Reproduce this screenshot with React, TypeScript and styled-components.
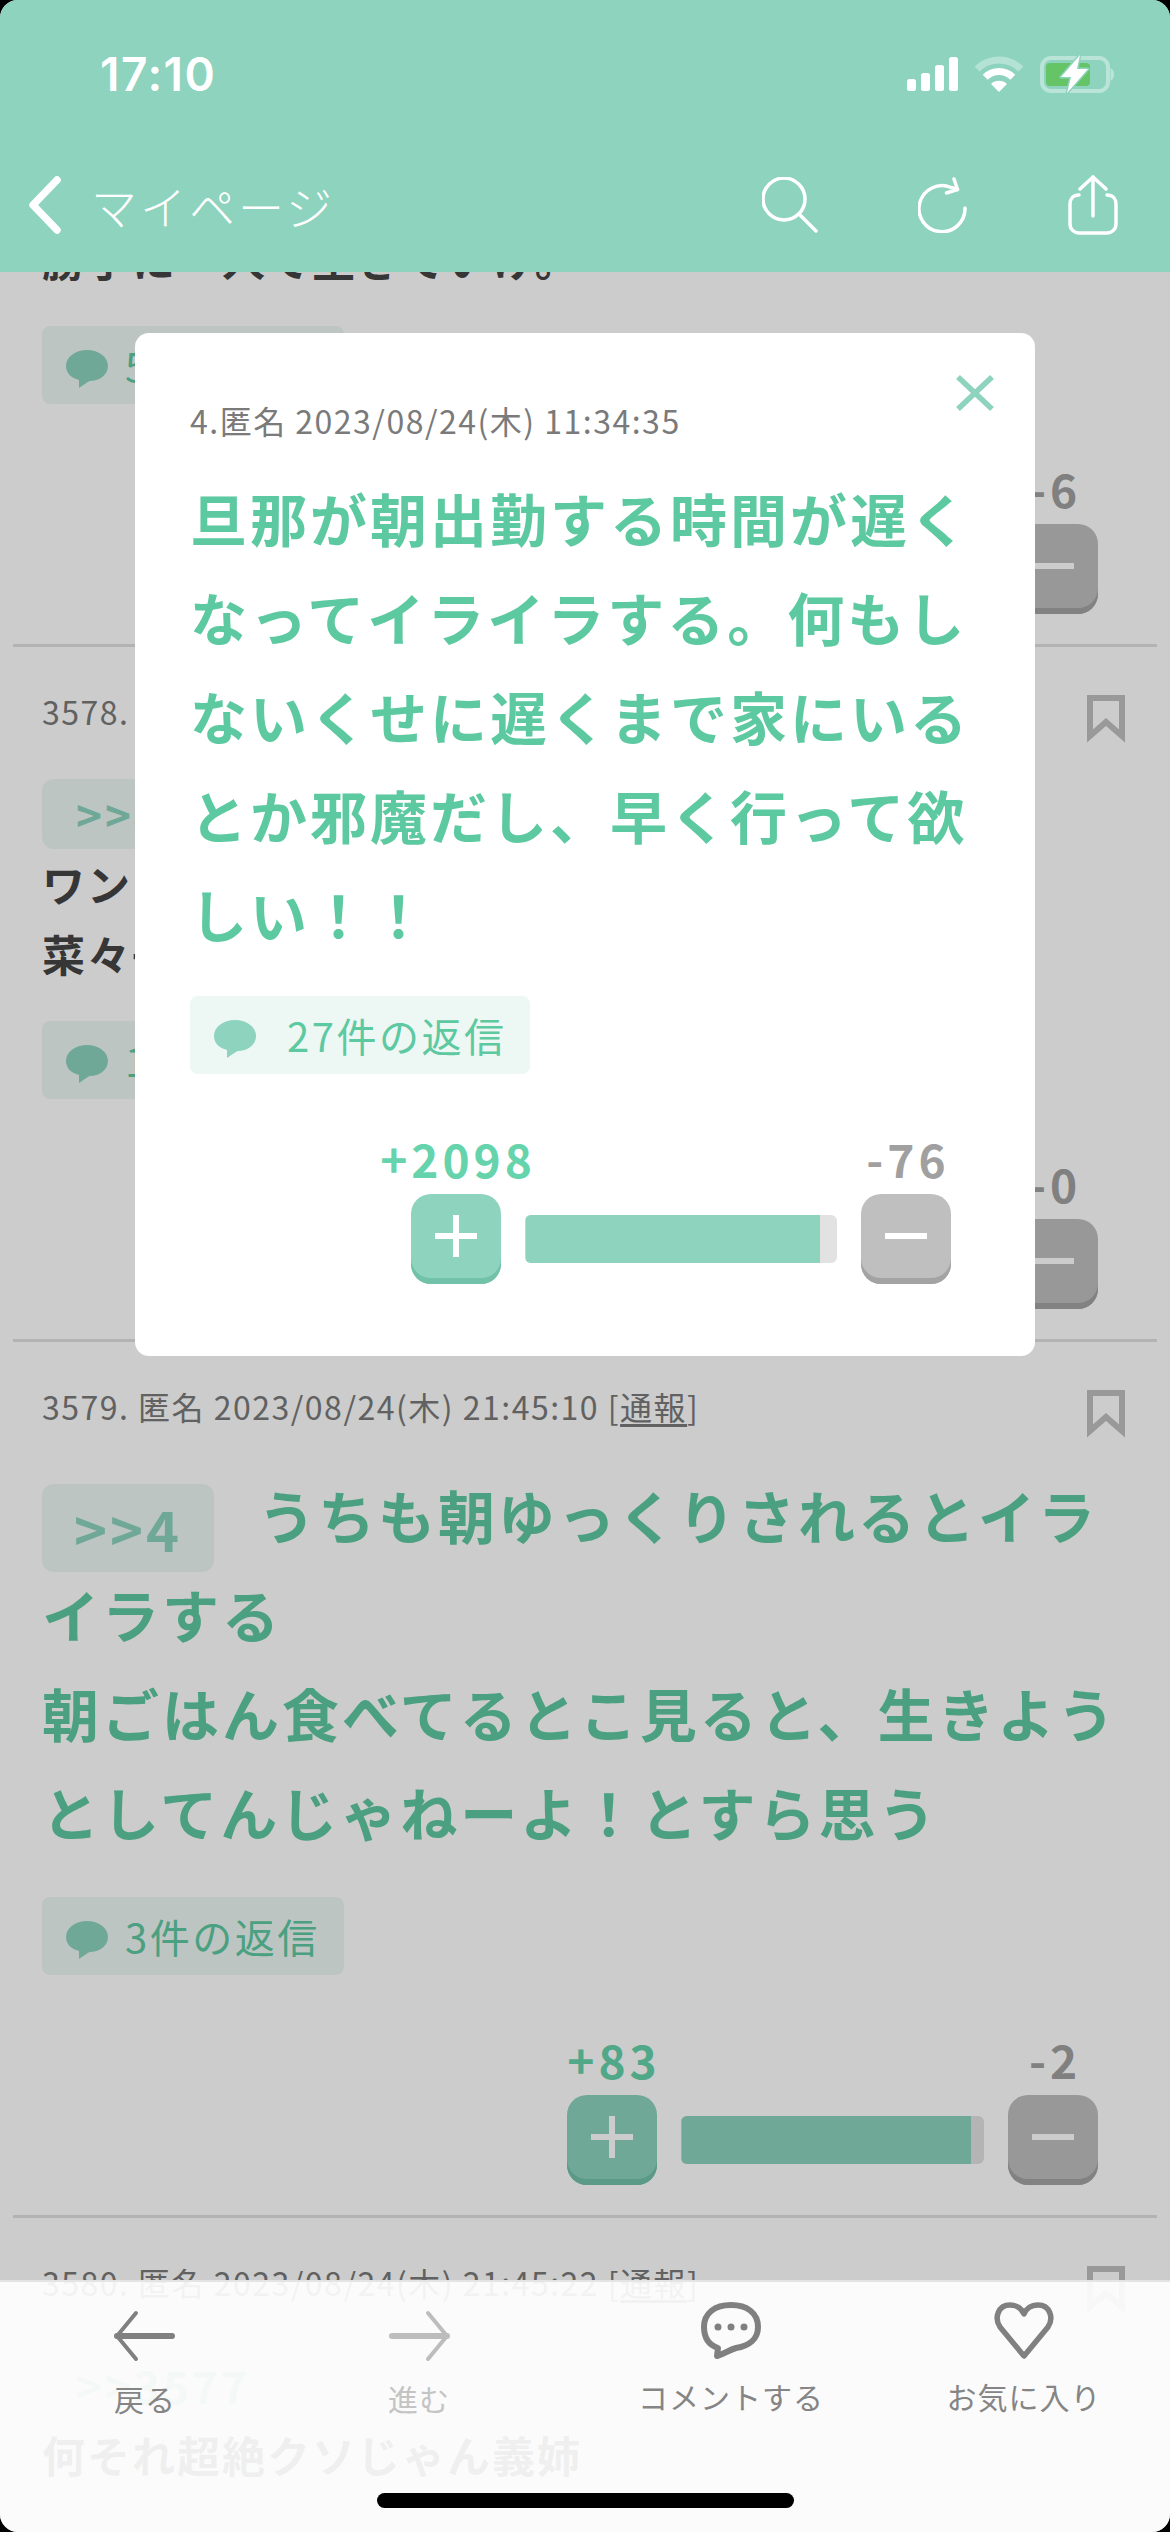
import React from "react";
import styled, { createGlobalStyle } from "styled-components";

const GlobalStyle = createGlobalStyle`
  html, body {
    margin: 0;
    padding: 0;
    background: #000000;
  }
  * {
    box-sizing: border-box;
  }
`;

const Phone = styled.div`
  position: relative;
  width: 1170px;
  height: 2532px;
  overflow: hidden;
  border-radius: 18px;
  background: #ffffff;
  font-family: "Noto Sans CJK JP", "Noto Sans", sans-serif;
`;

const Header = styled.header`
  position: relative;
  z-index: 3;
  height: 272px;
  background: #8dd3be;
  color: #ffffff;
`;

const StatusBar = styled.div`
  height: 148px;
  padding: 0 55px 0 100px;
  display: flex;
  align-items: center;
  justify-content: space-between;
`;

const Time = styled.span`
  font-family: Inter, sans-serif;
  font-weight: 600;
  font-size: 46px;
  letter-spacing: 1.500px;
`;

const StatusIcons = styled.div`
  display: flex;
  align-items: center;
  gap: 15px;
`;

const Nav = styled.nav`
  height: 124px;
  padding: 0 52px 10px 28px;
  display: flex;
  align-items: center;
`;

const NavTitle = styled.span`
  margin-left: 29px;
  margin-right: auto;
  font-size: 46px;
  letter-spacing: 3px;
  font-weight: 300;
`;

const NavIcons = styled.div`
  display: flex;
  align-items: center;
  gap: 100px;
`;

const Feed = styled.main`
  margin-top: -49px;
`;

const Post = styled.article`
  padding: 0 42px;
`;

const Meta = styled.div`
  font-size: 32px;
  line-height: 44px;
  color: #7a7a7a;
  letter-spacing: 1.500px;
  white-space: nowrap;

  u {
    text-underline-offset: 4px;
  }
`;

const PostTop = styled.div`
  padding-top: 44px;
  height: 92px;
  margin-bottom: 38px;
  display: flex;
  align-items: center;
  justify-content: space-between;

  ${Meta} {
    margin-bottom: 8px;
  }
`;

const Bookmark = styled.svg`
  width: 38px;
  height: 48px;
  margin: 8px 3px 0 0;
  flex: none;
`;

const Divider = styled.hr`
  margin: 30px -29px 0;
  border: 0;
  height: 3px;
  background: #e0e0e0;
`;

const Tag = styled.span<{ $large?: boolean }>`
  display: inline-block;
  height: ${(p) => (p.$large ? "88px" : "70px")};
  line-height: ${(p) => (p.$large ? "88px" : "70px")};
  padding: 0 ${(p) => (p.$large ? "32px" : "34px")};
  margin-top: ${(p) => (p.$large ? "0" : "2px")};
  margin-right: ${(p) => (p.$large ? "44px" : "0")};
  margin-bottom: ${(p) => (p.$large ? "-8px" : "-1px")};
  border-radius: 12px;
  background: #edf7f4;
  color: #8dd3be;
  font-size: ${(p) => (p.$large ? "56px" : "44px")};
  font-weight: 700;
  letter-spacing: 3px;
  vertical-align: ${(p) => (p.$large ? "-13px" : "top")};
`;

const Title = styled.div`
  font-size: 57px;
  line-height: 99px;
  font-weight: 700;
  letter-spacing: 3px;
  color: #5dc9a1;
`;

const PostTitle = styled(Title)`
  margin-top: -7px;
  padding-bottom: 3px;
`;

const PlainText = styled.div`
  font-size: 43px;
  line-height: 70px;
  font-weight: 700;
  letter-spacing: 2px;
  color: #444444;
  white-space: nowrap;
`;

const Replies = styled.div<{ $gap: number; $inset: number }>`
  display: flex;
  align-items: center;
  width: fit-content;
  height: 78px;
  margin-top: 33px;
  padding: 0 24px 0 ${(p) => p.$inset}px;
  gap: ${(p) => p.$gap}px;
  border-radius: 8px;
  background: #edf7f4;
  color: #5dc9a1;
  font-size: 40px;
  letter-spacing: 2.500px;
  white-space: nowrap;

  svg {
    margin-top: 8px;
  }
`;

const VoteGrid = styled.div<{ $width: number; $inset: number }>`
  display: grid;
  grid-template-columns: 90px 1fr 90px;
  column-gap: 24px;
  row-gap: 14px;
  width: ${(p) => p.$width}px;
  margin: 62px ${(p) => p.$inset}px 0 auto;
  align-items: start;
`;

const Count = styled.span<{ $kind: "plus" | "minus" }>`
  justify-self: center;
  margin-left: 4px;
  line-height: 44px;
  font-size: 46px;
  font-weight: 700;
  letter-spacing: 4px;
  white-space: nowrap;
  color: ${(p) => (p.$kind === "plus" ? "#65d3ab" : "#a0a0a0")};

  &:nth-child(2) {
    grid-column: 3;
  }
`;

const VoteButton = styled.div<{ $kind: "plus" | "minus" }>`
  height: 90px;
  padding-bottom: 6px;
  display: flex;
  align-items: center;
  justify-content: center;
  border-radius: 20px;
  background: ${(p) => (p.$kind === "plus" ? "#8dd3be" : "#bfbfbf")};
  box-shadow: inset 0 -6px 0 ${(p) => (p.$kind === "plus" ? "#72c1a9" : "#a3a3a3")};
`;

const Track = styled.div`
  position: relative;
  height: 48px;
  margin-top: 21px;
  overflow: hidden;
  border-radius: 6px;
  background: #e2e2e2;
`;

const Fill = styled.div`
  height: 100%;
  background: #8dd3be;
  box-shadow: inset 7px 0 0 -6px rgba(255, 255, 255, 0.3);
`;

const Backdrop = styled.div`
  position: absolute;
  inset: 0;
  z-index: 1;
  background: rgba(0, 0, 0, 0.2);
`;

const Modal = styled.section`
  position: absolute;
  z-index: 2;
  left: 135px;
  top: 333px;
  width: 900px;
  height: 1023px;
  padding: 65px 84px 0 55px;
  border-radius: 14px;
  background: #ffffff;
`;

const ModalBody = styled(Title)`
  width: 790px;
  margin-top: 26px;
`;

const CloseIcon = styled.svg`
  position: absolute;
  top: 42px;
  right: 41px;
  width: 38px;
  height: 36px;
`;

const Footer = styled.footer`
  position: absolute;
  z-index: 3;
  left: 0;
  right: 0;
  bottom: 0;
  height: 252px;
  padding-top: 20px;
  display: grid;
  grid-template-columns: 290px 258px 366px 220px;
  align-items: start;
  background: rgba(255, 255, 255, 0.92);
  border-top: 2px solid rgba(225, 225, 225, 0.9);
`;

const FooterItem = styled.div`
  display: flex;
  flex-direction: column;
  align-items: center;
`;

const FooterLabel = styled.span<{ $low?: boolean; $muted?: boolean }>`
  margin-top: ${(p) => (p.$low ? "16px" : "14px")};
  line-height: 40px;
  font-size: 30px;
  letter-spacing: 1px;
  white-space: nowrap;
  color: ${(p) => (p.$muted ? "#c4c4c4" : "#858585")};
`;

const HomeBar = styled.div`
  position: absolute;
  left: 377px;
  bottom: 24px;
  width: 417px;
  height: 15px;
  border-radius: 8px;
  background: #000000;
`;

const Chevron = () => (
  <svg width="34" height="58" viewBox="0 0 34 58" fill="none" stroke="#fff" strokeWidth="7.5" strokeLinecap="round" strokeLinejoin="round">
    <path d="M29 4 L5 29 L29 54" />
  </svg>
);

const SignalIcon = () => (
  <svg width="52" height="34" viewBox="0 0 52 34" fill="#fff">
    <rect x="0" y="22" width="9" height="12" rx="2.5" />
    <rect x="14" y="16" width="9" height="18" rx="2.5" />
    <rect x="28" y="8" width="9" height="26" rx="2.5" />
    <rect x="42" y="0" width="9" height="34" rx="2.5" />
  </svg>
);

const WifiIcon = () => (
  <svg width="50" height="38" viewBox="0 0 50 38" fill="none">
    <path d="M3.1 14.1 A31 31 0 0 1 46.9 14.1" stroke="#fff" strokeOpacity="0.35" strokeWidth="7" />
    <path d="M11.2 22.2 A19.5 19.5 0 0 1 38.8 22.2" stroke="#fff" strokeWidth="7" />
    <path d="M25 37 L17 29 A11.5 11.5 0 0 1 33 29 Z" fill="#fff" />
  </svg>
);

const BatteryIcon = () => (
  <svg width="76" height="40" viewBox="0 0 76 40" fill="none">
    <rect x="3" y="4" width="66" height="33" rx="9" stroke="#fff" strokeOpacity="0.4" strokeWidth="4" />
    <path d="M71.5 14 C74 15 75 17.500 75 20.500 C75 23.500 74 25.500 71.500 27 Z" fill="#fff" fillOpacity="0.4" />
    <rect x="7" y="9" width="44" height="23" rx="4" fill="#65c466" />
    <path d="M41 1 L22 23 L32 23 L28 39 L49 15 L38 15 Z" fill="#fff" stroke="#8dd3be" strokeWidth="3" paintOrder="stroke" strokeLinejoin="round" />
  </svg>
);

const SearchIcon = () => (
  <svg width="56" height="56" viewBox="0 0 56 56" fill="none" stroke="#fff" strokeWidth="3.5" strokeLinecap="round">
    <circle cx="22" cy="22" r="21" />
    <path d="M37 37 L54 54" />
  </svg>
);

const ReloadIcon = () => (
  <svg width="50" height="56" viewBox="0 0 50 56" fill="none" stroke="#fff" strokeWidth="3.5" strokeLinecap="round" strokeLinejoin="round">
    <path d="M47 31 A23 23 0 1 1 33 10.500 C36 11.200 39 11.800 39.500 12.500" />
    <path d="M36 2 L39.500 12.500 L28.500 16" />
  </svg>
);

const ShareIcon = () => (
  <svg width="50" height="60" viewBox="0 0 50 60" fill="none" stroke="#fff" strokeWidth="3.5" strokeLinecap="round" strokeLinejoin="round">
    <path d="M25 2 L25 41" />
    <path d="M12 14 L25 2 L38 14" />
    <path d="M11 20 C5 20 2 24 2 29 L2 49 C2 54 6 58 11 58 L39 58 C44 58 48 54 48 49 L48 29 C48 24 45 20 39 20" />
  </svg>
);

const BookmarkIcon = () => (
  <Bookmark viewBox="0 0 38 48" fill="none" stroke="#c0c0c0" strokeWidth="6">
    <path d="M3 3 H35 V41 L19 27 L3 41 Z" />
  </Bookmark>
);

const BubbleIcon = () => (
  <svg width="42" height="38" viewBox="0 0 42 38" fill="#8dd3be">
    <path d="M21 0 C33 0 42 7 42 16 C42 25 33 31 24 31 C21 32 16 36 13 38 L13 30 C5 28 0 23 0 16 C0 7 9 0 21 0 Z" />
  </svg>
);

const PlusGlyph = () => (
  <svg width="42" height="42" viewBox="0 0 42 42" fill="#fff">
    <rect x="0" y="18" width="42" height="6" />
    <rect x="18" y="0" width="6" height="42" />
  </svg>
);

const MinusGlyph = () => (
  <svg width="42" height="42" viewBox="0 0 42 42" fill="#fff">
    <rect x="0" y="18" width="42" height="6" />
  </svg>
);

const ArrowIcon = ({ flip, color }: { flip?: boolean; color: string }) => (
  <svg width="62" height="60" viewBox="0 0 62 60" fill="none" stroke={color} strokeLinecap="round" strokeLinejoin="round" style={flip ? { transform: "scaleX(-1)" } : undefined}>
    <path d="M3 34 L58 34" strokeWidth="6" />
    <path d="M22 11 L3 34 L22 57" strokeWidth="4" />
  </svg>
);

const CommentIcon = () => (
  <svg width="62" height="60" viewBox="0 0 62 60" fill="none">
    <path d="M31 3 C47 3 58 11 58 25 C58 37 49 44 36 46 C29 48 24 52 17 54 L18 46 C9 43 4 36 4 25 C4 11 15 3 31 3 Z" stroke="#808080" strokeWidth="6" strokeLinejoin="round" />
    <circle cx="18" cy="25" r="3.5" fill="#808080" />
    <circle cx="31" cy="25" r="3.5" fill="#808080" />
    <circle cx="44" cy="25" r="3.500" fill="#808080" />
  </svg>
);

const HeartIcon = () => (
  <svg width="60" height="60" viewBox="0 0 60 60" fill="none">
    <path d="M30 54 L6 25 C0 16 4 3 16 3 C23 3 28 7 30 12 C32 7 37 3 44 3 C56 3 60 16 54 25 Z" stroke="#808080" strokeWidth="5.500" strokeLinejoin="round" />
  </svg>
);

type VoteProps = { plus: string; minus: string; fill: number; width: number; inset: number };

const Vote = ({ plus, minus, fill, width, inset }: VoteProps) => (
  <VoteGrid $width={width} $inset={inset}>
    <Count $kind="plus">{plus}</Count>
    <Count $kind="minus">{minus}</Count>
    <VoteButton $kind="plus">
      <PlusGlyph />
    </VoteButton>
    <Track>
      <Fill style={{ width: `${fill}%` }} />
    </Track>
    <VoteButton $kind="minus">
      <MinusGlyph />
    </VoteButton>
  </VoteGrid>
);

const ReplyChip = ({ label, gap, inset }: { label: string; gap: number; inset: number }) => (
  <Replies $gap={gap} $inset={inset}>
    <BubbleIcon />
    {label}
  </Replies>
);

const PostHead = ({ meta }: { meta: string }) => (
  <PostTop>
    <Meta>
      {meta} [<u>通報</u>]
    </Meta>
    <BookmarkIcon />
  </PostTop>
);

const App = () => {
  return (
    <Phone>
      <GlobalStyle />
      <Header>
        <StatusBar>
          <Time>17:10</Time>
          <StatusIcons>
            <SignalIcon />
            <WifiIcon />
            <BatteryIcon />
          </StatusIcons>
        </StatusBar>
        <Nav>
          <Chevron />
          <NavTitle>マイページ</NavTitle>
          <NavIcons>
            <SearchIcon />
            <ReloadIcon />
            <ShareIcon />
          </NavIcons>
        </Nav>
      </Header>

      <Feed>
        <Post>
          <PlainText>勝手に一人で生きていけ。</PlainText>
          <ReplyChip label="5件の返信" gap={17} inset={24} />
          <Vote plus="+52" minus="-6" fill={95} width={531} inset={30} />
          <Divider />
        </Post>
        <Post>
          <PostHead meta="3578. 匿名 2023/08/24(木) 21:43:02" />
          <Tag>&gt;&gt;4</Tag>
          <PlainText>
            ワンちゃんのお散歩
            <br />
            菜々子も一緒
          </PlainText>
          <ReplyChip label="1件の返信" gap={17} inset={24} />
          <Vote plus="+31" minus="-0" fill={96} width={531} inset={30} />
          <Divider />
        </Post>
        <Post>
          <PostHead meta="3579. 匿名 2023/08/24(木) 21:45:10" />
          <PostTitle>
            <Tag $large>&gt;&gt;4</Tag>
            うちも朝ゆっくりされるとイラ
            <br />
            イラする
            <br />
            朝ごはん食べてるとこ見ると、生きよう
            <br />
            としてんじゃねーよ！とすら思う
          </PostTitle>
          <ReplyChip label="3件の返信" gap={17} inset={24} />
          <Vote plus="+83" minus="-2" fill={95.7} width={531} inset={30} />
          <Divider />
        </Post>
        <Post>
          <PostHead meta="3580. 匿名 2023/08/24(木) 21:45:22" />
          <Tag>&gt;&gt;3577</Tag>
          <PlainText>何それ超絶クソじゃん義姉</PlainText>
        </Post>
      </Feed>

      <Backdrop />

      <Modal>
        <CloseIcon viewBox="0 0 38 36" fill="none" stroke="#8dd3be" strokeWidth="5.500">
          <path d="M2 2 L36 34 M36 2 L2 34" />
        </CloseIcon>
        <Meta>4.匿名 2023/08/24(木) 11:34:35</Meta>
        <ModalBody>旦那が朝出勤する時間が遅くなってイライラする。何もしないくせに遅くまで家にいるとか邪魔だし、早く行って欲しい！！</ModalBody>
        <ReplyChip label="27件の返信" gap={31} inset={24} />
        <Vote plus="+2098" minus="-76" fill={94.6} width={540} inset={0} />
      </Modal>

      <Footer>
        <FooterItem>
          <ArrowIcon color="#808080" />
          <FooterLabel $low>戻る</FooterLabel>
        </FooterItem>
        <FooterItem>
          <ArrowIcon flip color="#bdbdbd" />
          <FooterLabel $low $muted>
            進む
          </FooterLabel>
        </FooterItem>
        <FooterItem>
          <CommentIcon />
          <FooterLabel>コメントする</FooterLabel>
        </FooterItem>
        <FooterItem>
          <HeartIcon />
          <FooterLabel>お気に入り</FooterLabel>
        </FooterItem>
        <HomeBar />
      </Footer>
    </Phone>
  );
};

export default App;
